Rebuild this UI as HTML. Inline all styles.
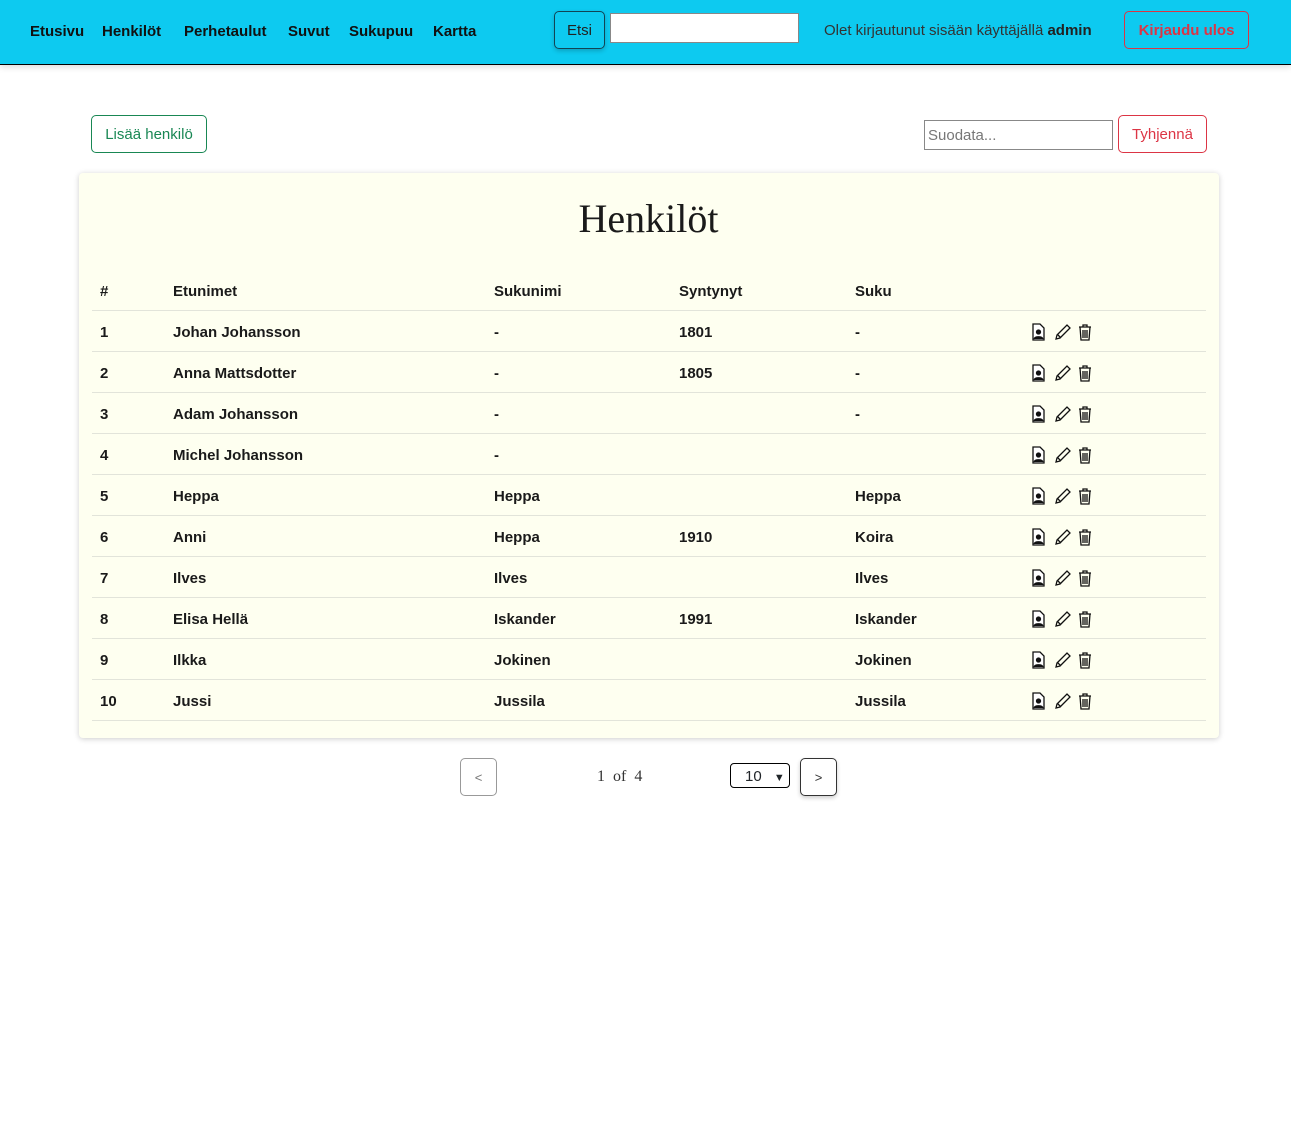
<!DOCTYPE html>
<html><head><meta charset="utf-8"><style>
*{box-sizing:border-box}
body{margin:0;font-family:"Liberation Sans",sans-serif;background:#fff;color:#212529}
.nav{position:absolute;left:0;top:0;width:1291px;height:65px;background:#0dcaf0;border-bottom:1px solid #000;box-shadow:0 2px 6px rgba(0,0,0,.15)}
.nav a{position:absolute;top:23px;font-size:15px;font-weight:bold;color:#111}
.btn{position:absolute;border-radius:5px;font-size:15px;display:flex;align-items:center;justify-content:center;background:transparent}
.card{position:absolute;left:79px;top:173px;width:1140px;height:565px;background:#fefff0;box-shadow:0 1px 6px rgba(0,0,0,.2);border-radius:4px}
h1{position:absolute;top:195px;left:3px;width:1291px;text-align:center;margin:0;font-family:"Liberation Serif",serif;font-weight:normal;font-size:40px;color:#1a1a1a}
.row{position:absolute;left:92px;width:1114px;height:41px;border-bottom:1px solid #e2e4da;font-size:15px;font-weight:bold;color:#1a1a1a}
.row span{position:absolute;top:13px}
.ic{position:absolute;top:12px;left:939px}
</style></head><body>
<div class="nav">
<a style="left:30px">Etusivu</a><a style="left:102px">Henkilöt</a><a style="left:184px">Perhetaulut</a><a style="left:288px">Suvut</a><a style="left:349px">Sukupuu</a><a style="left:433px">Kartta</a>
<div class="btn" style="left:554px;top:11px;width:51px;height:38px;border:1px solid #145;color:#222;box-shadow:0 2px 5px rgba(0,0,0,.2)">Etsi</div>
<div style="position:absolute;left:610px;top:13px;width:189px;height:30px;background:#fff;border:1px solid #888"></div>
<div style="position:absolute;left:824px;top:22px;font-size:15px;color:#333">Olet kirjautunut sisään käyttäjällä <b style="color:#222">admin</b></div>
<div class="btn" style="left:1124px;top:11px;width:125px;height:38px;border:1px solid #dc3545;color:#dc3545;font-weight:bold">Kirjaudu ulos</div>
</div>
<div class="btn" style="left:91px;top:115px;width:116px;height:38px;border:1px solid #198754;color:#198754">Lisää henkilö</div>
<div style="position:absolute;left:924px;top:120px;width:189px;height:30px;border:1px solid #888;font-size:15px;color:#777;padding:6px 3px">Suodata...</div>
<div class="btn" style="left:1118px;top:115px;width:89px;height:38px;border:1px solid #dc3545;color:#dc3545">Tyhjennä</div>
<div class="card"></div>
<h1>Henkilöt</h1>
<div id="t"></div>
<div class="btn" style="left:460px;top:758px;width:37px;height:38px;border:1px solid #999;color:#777;font-size:13px">&lt;</div>
<div style="position:absolute;left:597px;top:768px;font-family:'Liberation Serif',serif;font-size:16px;color:#333">1 &nbsp;of &nbsp;4</div>
<div style="position:absolute;left:730px;top:763px;width:60px;height:25px;border:1px solid #000;border-radius:4px;font-size:15px;padding:4px 0 0 14px">10 <span style="font-size:11px;margin-left:8px">&#9660;</span></div>
<div class="btn" style="left:800px;top:758px;width:37px;height:38px;border:1px solid #333;color:#333;font-size:13px;box-shadow:0 2px 4px rgba(0,0,0,.2)">&gt;</div>
<script>
var d=[["#","Etunimet","Sukunimi","Syntynyt","Suku"],["1","Johan Johansson","-","1801","-"],["2","Anna Mattsdotter","-","1805","-"],["3","Adam Johansson","-","","-"],["4","Michel Johansson","-","",""],["5","Heppa","Heppa","","Heppa"],["6","Anni","Heppa","1910","Koira"],["7","Ilves","Ilves","","Ilves"],["8","Elisa Hellä","Iskander","1991","Iskander"],["9","Ilkka","Jokinen","","Jokinen"],["10","Jussi","Jussila","","Jussila"]];
var x=[8,81,402,587,763],h="";
var ic='<svg class="ic" width="70" height="18" viewBox="0 0 70 18" fill="none" stroke="#111" stroke-width="1.3"><path d="M2 1h7l4 4v12H2z" fill="#fff"/><circle cx="7.5" cy="9" r="2" fill="#111"/><path d="M3 16c1-3 8-3 9 0" fill="#111"/><path d="M25 16l1-4 10-10 3 3-10 10z M27 12l3 3"/><path d="M48 4h12 M52 4V2h4v2 M49 4l1 13h8l1-13 M52 7v8 M54 7v8 M56 7v8"/></svg>';
d.forEach(function(r,i){var top=i==0?270:270+41*i;h+='<div class="row" style="top:'+top+'px">';r.forEach(function(c,j){h+='<span style="left:'+x[j]+'px">'+c+'</span>'});if(i)h+=ic;h+='</div>'});
document.getElementById('t').innerHTML=h;
</script>
</body></html>
